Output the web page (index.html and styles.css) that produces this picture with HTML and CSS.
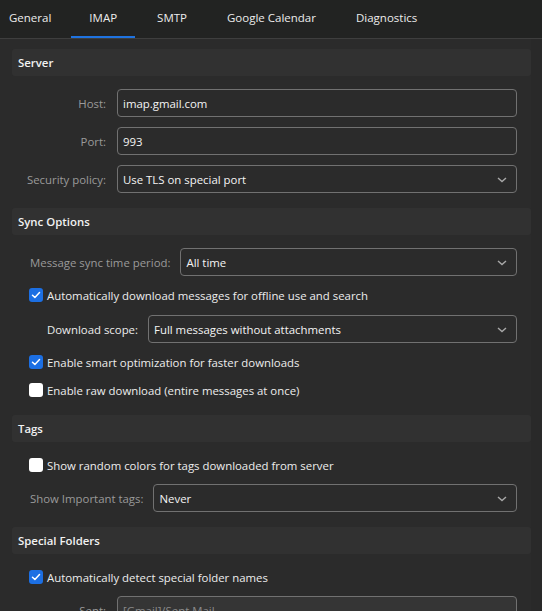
FILE: index.html
```html
<!DOCTYPE html>
<html>
<head>
<meta charset="utf-8">
<link rel="stylesheet" href="styles.css">
</head>
<body>
<div class="tabs">
  <div class="tab first">General</div>
  <div class="tab active">IMAP</div>
  <div class="tab">SMTP</div>
  <div class="tab">Google Calendar</div>
  <div class="tab">Diagnostics</div>
</div>
<div class="page">
  <div class="content">
    <div class="section-head first">Server</div>
    <div class="section-body server">
      <div class="frow">
        <label class="rlabel">Host:</label>
        <div class="field">imap.gmail.com</div>
      </div>
      <div class="frow">
        <label class="rlabel">Port:</label>
        <div class="field">993</div>
      </div>
      <div class="frow">
        <label class="rlabel">Security policy:</label>
        <div class="field select">Use TLS on special port<svg class="chev" viewBox="0 0 10 6"><path d="M1 1l4 3.6L9 1"/></svg></div>
      </div>
    </div>

    <div class="section-head">Sync Options</div>
    <div class="section-body">
      <div class="lrow">
        <label class="llabel">Message sync time period:</label>
        <div class="field select">All time<svg class="chev" viewBox="0 0 10 6"><path d="M1 1l4 3.6L9 1"/></svg></div>
      </div>
      <div class="check-row">
        <span class="box on"><svg viewBox="0 0 14 14"><path d="M3.5 7.2l2.4 2.3 4.6-4.9"/></svg></span>
        <span>Automatically download messages for offline use and search</span>
      </div>
      <div class="lrow sub">
        <label class="slabel">Download scope:</label>
        <div class="field select">Full messages without attachments<svg class="chev" viewBox="0 0 10 6"><path d="M1 1l4 3.6L9 1"/></svg></div>
      </div>
      <div class="check-row">
        <span class="box on"><svg viewBox="0 0 14 14"><path d="M3.5 7.2l2.4 2.3 4.6-4.9"/></svg></span>
        <span>Enable smart optimization for faster downloads</span>
      </div>
      <div class="check-row">
        <span class="box"></span>
        <span>Enable raw download (entire messages at once)</span>
      </div>
    </div>

    <div class="section-head">Tags</div>
    <div class="section-body">
      <div class="check-row">
        <span class="box"></span>
        <span>Show random colors for tags downloaded from server</span>
      </div>
      <div class="lrow">
        <label class="llabel">Show Important tags:</label>
        <div class="field select">Never<svg class="chev" viewBox="0 0 10 6"><path d="M1 1l4 3.6L9 1"/></svg></div>
      </div>
    </div>

    <div class="section-head">Special Folders</div>
    <div class="section-body">
      <div class="check-row">
        <span class="box on"><svg viewBox="0 0 14 14"><path d="M3.5 7.2l2.4 2.3 4.6-4.9"/></svg></span>
        <span>Automatically detect special folder names</span>
      </div>
      <div class="frow">
        <label class="rlabel">Sent:</label>
        <div class="field dim">[Gmail]/Sent Mail</div>
      </div>
    </div>
  </div>
  <div class="scrollbar"></div>
</div>
</body>
</html>
```

FILE: styles.css
```css
html, body {
  margin: 0;
  padding: 0;
  height: 100%;
  overflow: hidden;
}
body {
  background: #2b2b2b;
  color: #ededed;
  font-family: "Open Sans", "Noto Sans", sans-serif;
  font-size: 11.4px;
}
.tabs {
  display: flex;
  gap: 4px;
  height: 38px;
  background: #222322;
  border-bottom: 1px solid #3e3e3e;
  box-sizing: content-box;
}
.tab {
  padding: 0 18px;
  line-height: 36px;
  font-size: 11.5px;
  color: #ececec;
  border-bottom: 2px solid transparent;
}
.tab.first {
  padding-left: 9px;
  padding-right: 16px;
}
.tab.active {
  border-bottom-color: #1f73e0;
}
.page {
  display: flex;
}
.content {
  flex: 1;
  padding-left: 12px;
}
.scrollbar {
  width: 11px;
  background: #292929;
}
.section-head {
  height: 27px;
  line-height: 27px;
  margin-top: 15px;
  padding-left: 6px;
  background: #313131;
  border-radius: 3px;
  font-weight: 600;
  color: #f2f2f2;
}
.section-head.first {
  margin-top: 10px;
}
.section-body {
  display: flex;
  flex-direction: column;
  gap: 9px;
  padding: 13px 14px 0 0;
}
.section-body.server {
  gap: 10px;
}
.frow {
  display: flex;
  align-items: center;
}
.rlabel {
  width: 94px;
  text-align: right;
  color: #9a9a9a;
  margin-right: 11px;
}
.lrow {
  display: flex;
  align-items: center;
  padding-left: 18px;
}
.lrow.sub {
  padding-left: 35px;
  margin-top: 1px;
}
.llabel {
  color: #9a9a9a;
  margin-right: 10px;
  white-space: nowrap;
}
.slabel {
  color: #ececec;
  margin-right: 10px;
  white-space: nowrap;
}
.field {
  flex: 1;
  height: 28px;
  box-sizing: border-box;
  border: 1px solid #717171;
  border-radius: 4px;
  padding: 0 5px;
  display: flex;
  align-items: center;
  color: #f4f4f4;
  position: relative;
}
.field.dim {
  background: #353535;
  color: #8a8a8a;
}
.chev {
  position: absolute;
  right: 9px;
  top: 11px;
  width: 10px;
  height: 6px;
  fill: none;
  stroke: #a8a8a8;
  stroke-width: 1.4;
}
.check-row {
  display: flex;
  align-items: center;
  height: 20px;
  padding-left: 17px;
  color: #ededed;
}
.check-row + .check-row {
  margin-top: -1px;
}
.box {
  width: 14px;
  height: 14px;
  border-radius: 3px;
  background: #ffffff;
  margin-right: 4px;
  flex: none;
  display: flex;
}
.box.on {
  background: #1c6fe3;
}
.box svg {
  width: 14px;
  height: 14px;
  fill: none;
  stroke: #ffffff;
  stroke-width: 1.5;
  stroke-linecap: round;
  stroke-linejoin: round;
}
```
